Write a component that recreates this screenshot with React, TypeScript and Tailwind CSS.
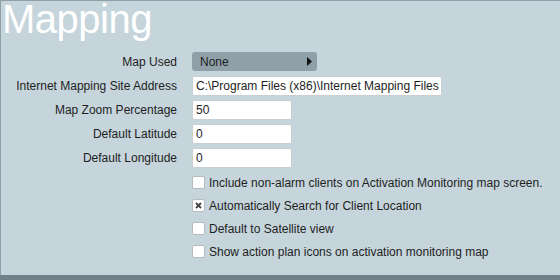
import React from 'react';

const fields = [
  { label: 'Internet Mapping Site Address', value: 'C:\\Program Files (x86)\\Internet Mapping Files', wide: true },
  { label: 'Map Zoom Percentage', value: '50' },
  { label: 'Default Latitude', value: '0' },
  { label: 'Default Longitude', value: '0' },
];

const options = [
  { label: 'Include non-alarm clients on Activation Monitoring map screen.', checked: false },
  { label: 'Automatically Search for Client Location', checked: true },
  { label: 'Default to Satellite view', checked: false },
  { label: 'Show action plan icons on activation monitoring map', checked: false },
];

const Checkbox: React.FC<{ checked: boolean }> = ({ checked }) => (
  <span className="w-[13px] h-[13px] bg-white border border-[#b4bcc0] rounded-[2px] flex items-center justify-center shrink-0">
    {checked && (
      <svg width="7" height="7" viewBox="0 0 7 7">
        <path d="M1 1L6 6M6 1L1 6" stroke="#444" strokeWidth="1.8" />
      </svg>
    )}
  </span>
);

export default function App() {
  return (
    <div className="w-[560px] h-[280px] bg-[#6e8089] font-['Liberation_Sans',Arial,sans-serif] overflow-hidden">
      <div className="h-[275px] bg-[#c5d5db] border-t border-l border-[#8f9fa7] flex flex-col">
        <h1 className="text-[40px] leading-[46px] mt-[-5px] text-white pl-[1px] tracking-[-0.5px]">Mapping</h1>

        <div className="flex flex-col mt-[10px] text-[12px] text-[#1e1e1e]">
          <div className="flex items-center h-[19px]">
            <span className="w-[176px] text-right">Map Used</span>
            <div className="ml-[15px] w-[125px] h-[19px] rounded-[3px] bg-[#8fa0a8] flex items-center justify-between pl-[8px] pr-[5px]">
              <span>None</span>
              <svg width="5" height="9" viewBox="0 0 5 9">
                <path d="M0 0L5 4.5L0 9Z" fill="#111" />
              </svg>
            </div>
          </div>

          <div className="flex flex-col gap-[4px] mt-[5px]">
            {fields.map((f) => (
              <div key={f.label} className="flex items-center h-[20px]">
                <span className="w-[176px] text-right">{f.label}</span>
                <div
                  className={
                    'ml-[15px] h-[20px] bg-white border border-[#c9cfd2] rounded-[2px] flex items-center pl-[3px] pr-[1px] whitespace-nowrap ' +
                    (f.wide ? 'w-[250px]' : 'w-[100px]')
                  }
                >
                  {f.value}
                </div>
              </div>
            ))}
          </div>

          <div className="flex flex-col gap-[10px] mt-[8px] pl-[191px]">
            {options.map((o) => (
              <label key={o.label} className="flex items-center gap-[4px] h-[13px]">
                <Checkbox checked={o.checked} />
                <span>{o.label}</span>
              </label>
            ))}
          </div>
        </div>
      </div>
    </div>
  );
}
